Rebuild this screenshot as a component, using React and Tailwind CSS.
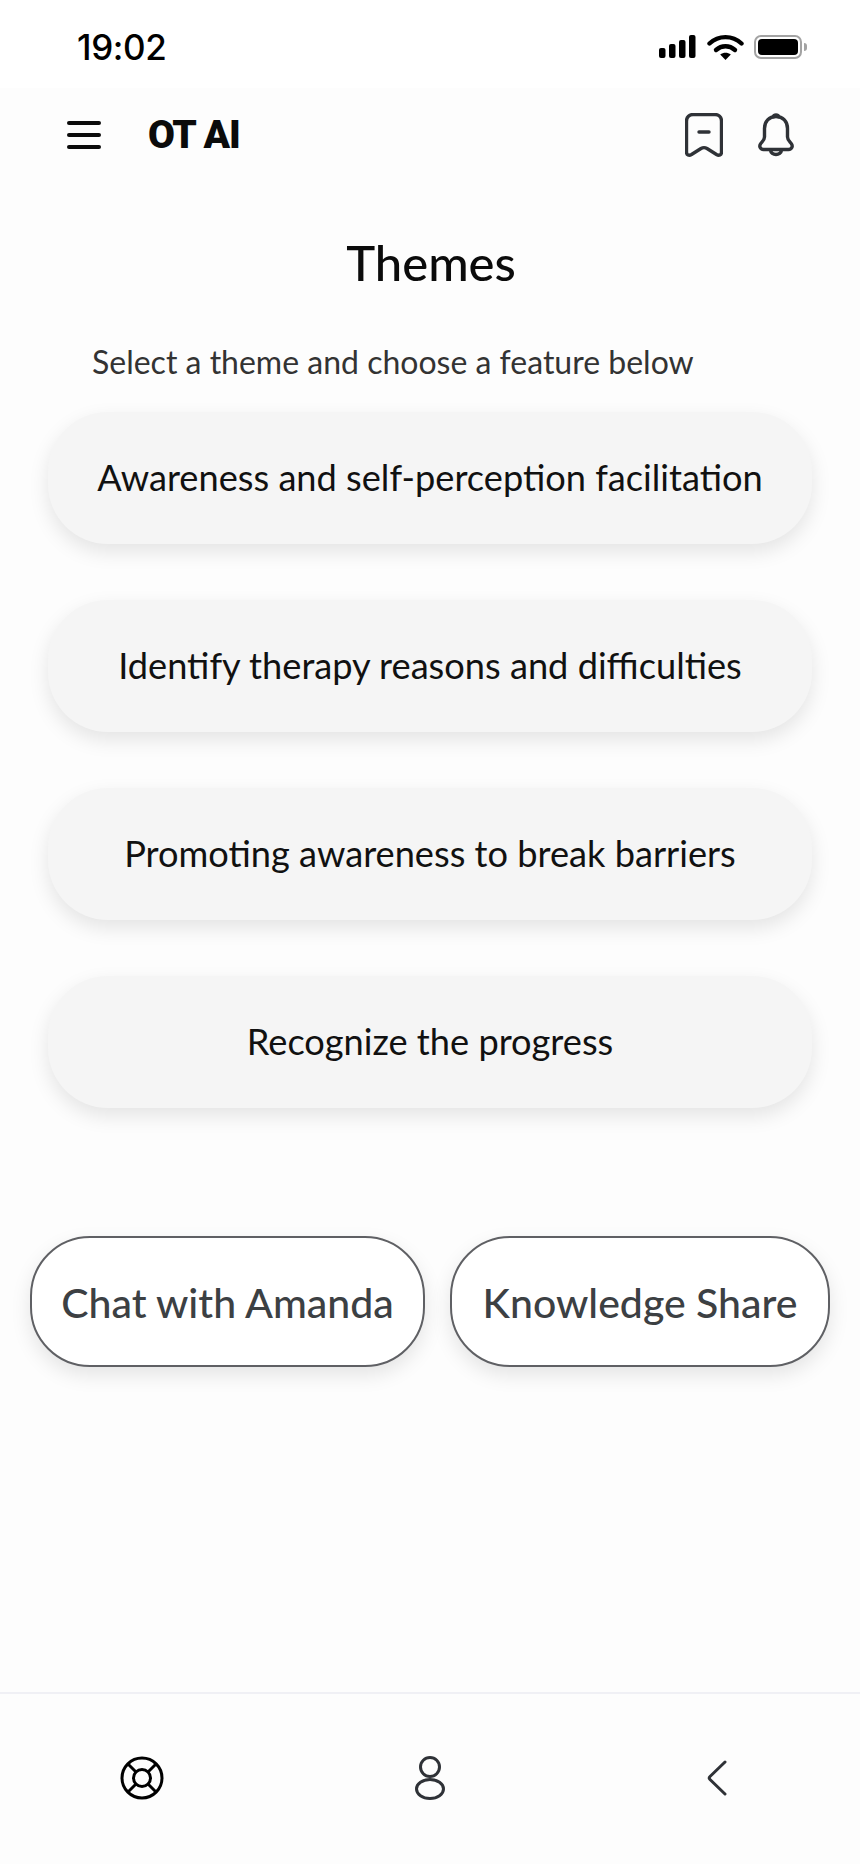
import React from 'react';

const themes = [
  'Awareness and self-perception facilitation',
  'Identify therapy reasons and difficulties',
  'Promoting awareness to break barriers',
  'Recognize the progress',
];

const StatusIcons = () => (
  <div className="flex items-center">
    <svg width="38" height="24" viewBox="0 0 38 24" fill="#000">
      <rect x="0" y="13" width="6.5" height="10" rx="2" />
      <rect x="10" y="9" width="6.5" height="14" rx="2" />
      <rect x="20" y="5" width="6.5" height="18" rx="2" />
      <rect x="30" y="0" width="6.5" height="23" rx="2" />
    </svg>
    <svg className="ml-[10px]" width="37" height="26" viewBox="0 0 37 26" fill="none">
      <path d="M2.5 9.5C11.5 1 25.5 1 34.5 9.5" stroke="#000" strokeWidth="4.4" strokeLinecap="round" />
      <path d="M9 16C14.5 11 22.5 11 28 16" stroke="#000" strokeWidth="4.4" strokeLinecap="round" />
      <path d="M13.2 20.5C16.3 18 20.7 18 23.8 20.5L18.5 26Z" fill="#000" />
    </svg>
    <div className="ml-[10px] flex items-center">
      <div className="flex h-[24px] w-[48px] rounded-[7px] border-2 border-[#a3a3a3] p-[2px]">
        <div className="h-full w-full rounded-[4px] bg-black" />
      </div>
      <div className="ml-[2px] h-[8px] w-[3px] rounded-r-full bg-[#a3a3a3]" />
    </div>
  </div>
);

const App = () => {
  return (
    <div className="flex h-[1864px] w-[860px] flex-col bg-[#fdfdfd] font-['Lato',sans-serif] overflow-hidden">
      {/* Barra de estado */}
      <div className="flex h-[88px] items-center justify-between bg-white pl-[77px] pr-[53px] pt-[6px]">
        <span className="font-['Inter',sans-serif] text-[35px] font-medium leading-none tracking-[-0.4px] text-black">19:02</span>
        <StatusIcons />
      </div>

      {/* Encabezado */}
      <div className="flex h-[94px] items-center pl-[67px] pr-[66px]">
        <svg width="34" height="28" viewBox="0 0 34 28" fill="none" stroke="#0b0b0b" strokeWidth="4" strokeLinecap="round">
          <path d="M2 2H32" />
          <path d="M2 14H32" />
          <path d="M2 26H32" />
        </svg>
        <span className="ml-[47px] font-['Roboto',sans-serif] text-[39px] font-black leading-none tracking-[-1px] text-[#0b0b0b]">OT AI</span>
        <div className="ml-auto flex items-center gap-[35px]">
          <svg width="38" height="44" viewBox="0 0 38 44" fill="none" stroke="#2f3237" strokeWidth="3.4" strokeLinecap="round" strokeLinejoin="round">
            <path d="M8 1.5H30C33.5 1.5 36.5 4 36.5 8V39C36.5 42 34 43 31.5 41.5L22 35.5C20 34.3 18 34.3 16 35.5L6.5 41.5C4 43 1.5 42 1.5 39V8C1.5 4 4.5 1.5 8 1.5Z" />
            <path d="M14 19H24" />
          </svg>
          <svg width="36" height="44" viewBox="0 0 36 44" fill="none" stroke="#2f3237" strokeWidth="3.4" strokeLinecap="round" strokeLinejoin="round">
            <path d="M18 3.5C11 3.5 6.5 8.5 6.5 15.5V24C6.5 27 4.5 28.5 2.8 30.5C0.8 33 2 36.5 5.5 36.5H30.5C34 36.5 35.2 33 33.2 30.5C31.5 28.5 29.5 27 29.5 24V15.5C29.5 8.5 25 3.5 18 3.5Z" />
            <path d="M15.5 3.5C16 1.5 20 1.5 20.5 3.5" />
            <path d="M12.5 37C13 43 23 43 23.5 37" />
          </svg>
        </div>
      </div>

      <h1 className="mt-[52px] pl-[2px] text-center text-[49px] font-medium leading-[56px] text-[#0b0b0b]">Themes</h1>
      <p className="mt-[52px] pl-[92px] text-[32px] leading-[40px] text-[#333333]">Select a theme and choose a feature below</p>

      <div className="mt-[30px] flex flex-col gap-[56px] px-[48px]">
        {themes.map((theme) => (
          <div
            key={theme}
            className="flex h-[132px] items-center justify-center rounded-[60px] bg-[#f5f5f5] pb-[2px] text-[36.2px] text-[#111111] shadow-[0_8px_20px_rgba(0,0,0,0.1)]"
          >
            {theme}
          </div>
        ))}
      </div>

      <div className="mt-[128px] flex gap-[25px] pl-[30px]">
        <button className="h-[131px] w-[395px] rounded-[60px] border-2 border-[#5f6064] bg-white pt-[2px] text-[41px] font-medium text-[#3c4043] shadow-[0_8px_20px_rgba(0,0,0,0.1)]">
          Chat with Amanda
        </button>
        <button className="h-[131px] w-[380px] rounded-[60px] border-2 border-[#5f6064] bg-white pt-[2px] text-[41px] font-medium text-[#3c4043] shadow-[0_8px_20px_rgba(0,0,0,0.1)]">
          Knowledge Share
        </button>
      </div>

      {/* Navegación inferior */}
      <div className="mt-auto grid h-[172px] grid-cols-3 items-center border-t-2 border-[#f0f0f5] pb-[3px]">
        <div className="flex justify-center">
          <svg className="-ml-[2px]" width="44" height="44" viewBox="0 0 44 44" fill="none" stroke="#000" strokeWidth="3">
            <circle cx="22" cy="22" r="20" />
            <circle cx="22" cy="22" r="8.5" />
            <path d="M8 8L16 16M36 8L28 16M8 36L16 28M36 36L28 28" />
          </svg>
        </div>
        <div className="flex justify-center">
          <svg width="30" height="44" viewBox="0 0 30 44" fill="none" stroke="#2f3237" strokeWidth="3">
            <circle cx="15" cy="11" r="9.5" />
            <ellipse cx="15" cy="33" rx="13.5" ry="9.5" />
          </svg>
        </div>
        <div className="flex justify-center">
          <svg width="20" height="36" viewBox="0 0 20 36" fill="none" stroke="#2f3237" strokeWidth="3" strokeLinecap="round" strokeLinejoin="round">
            <path d="M18 2L3 16.5C2 17.5 2 18.5 3 19.5L18 34" />
          </svg>
        </div>
      </div>
    </div>
  );
};

export default App;
